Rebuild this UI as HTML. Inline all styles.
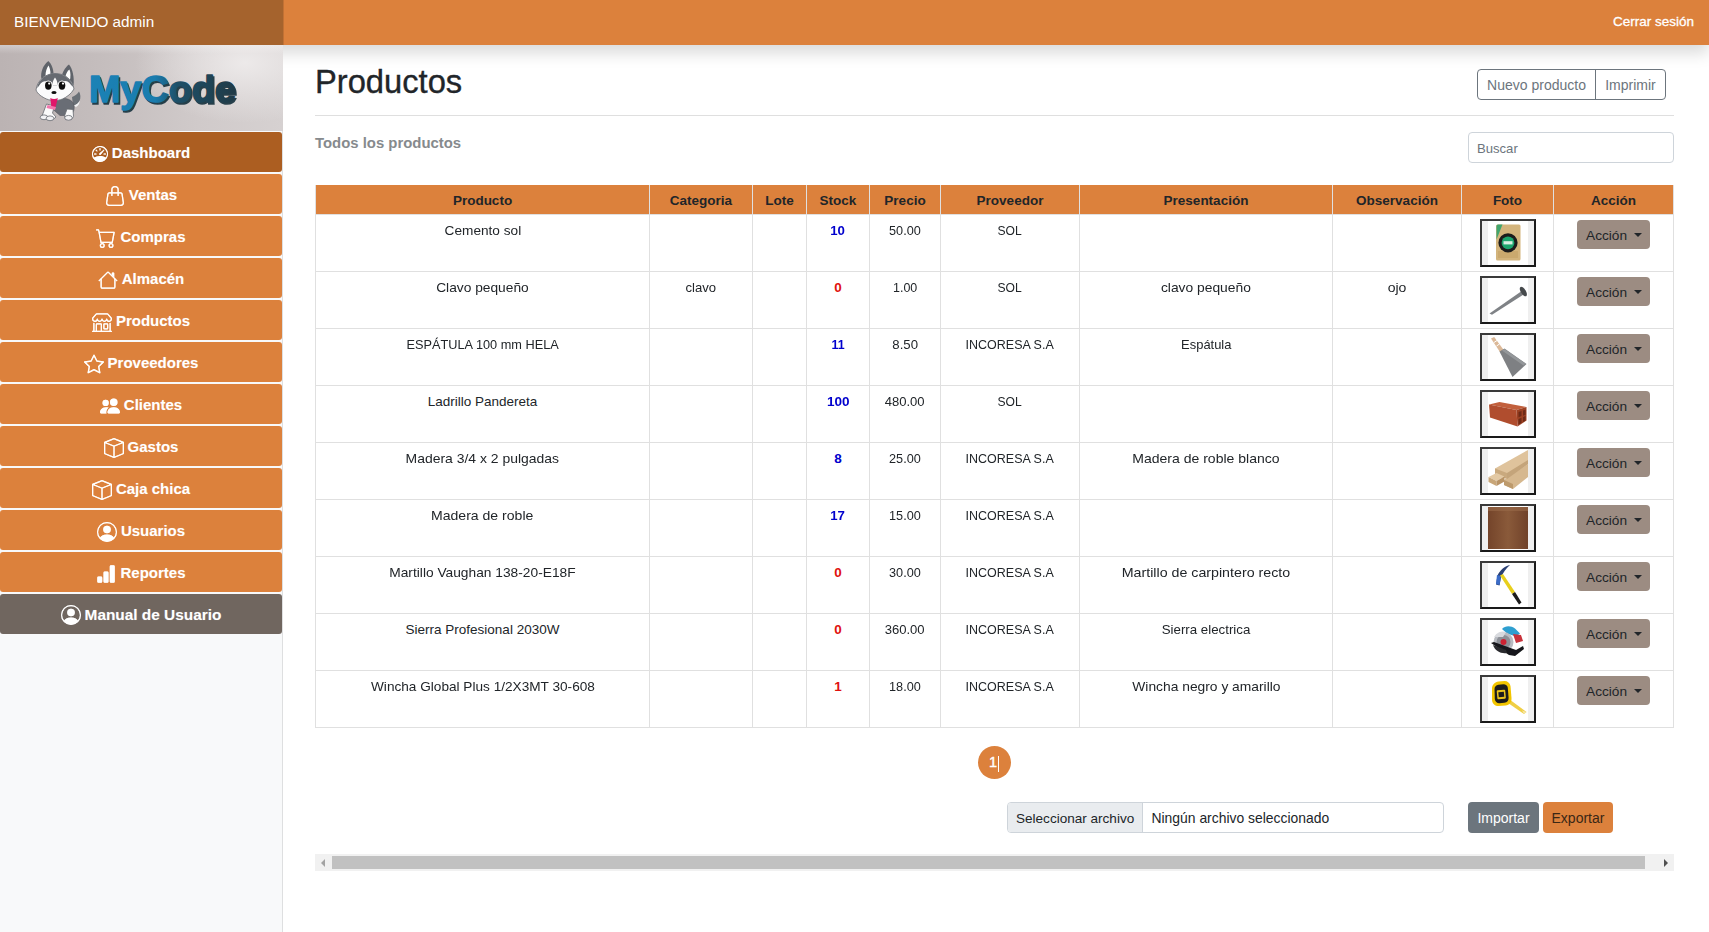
<!DOCTYPE html>
<html lang="es">
<head>
<meta charset="utf-8">
<title>Productos</title>
<style>
*{box-sizing:border-box}
html,body{margin:0;padding:0}
body{width:1709px;height:932px;overflow:hidden;background:#fff;font-family:"Liberation Sans",sans-serif;color:#212529;position:relative}
.abs{position:absolute}
#topbar{left:0;top:0;width:1709px;height:45px;background:#dc813c;box-shadow:0 8px 16px rgba(0,0,0,.15);z-index:5}
#brand{left:0;top:0;width:283px;height:45px;background:#a5632d;color:#fff;font-size:15.3px;line-height:43px;padding-left:14px;z-index:6;box-shadow:1px 0 0 rgba(0,0,0,.12)}
#logout{right:15px;top:0;height:45px;line-height:44px;color:#fff;font-size:13.5px;z-index:6;-webkit-text-stroke:.3px #fff}
#sidebar{left:0;top:45px;width:283px;height:887px;background:#f8f9fa;box-shadow:inset -1px 0 0 rgba(0,0,0,.1);z-index:2}
#logo{left:0;top:45px;width:283px;height:86px;z-index:5;background:linear-gradient(180deg,rgba(255,255,255,.3),rgba(255,255,255,0) 9px),radial-gradient(ellipse 110px 60px at 245px 18px,rgba(238,235,235,.95),rgba(238,235,235,0) 100%),linear-gradient(90deg,#bbb3b3 0%,#c4bdbd 35%,#d0caca 70%,#d6d1d1 100%)}
.mi{left:0;width:282px;height:40px;border-radius:3px;background:#dc813c;color:#fff;font-weight:bold;font-size:15px;line-height:41.5px;text-align:center;z-index:4;text-shadow:0 0 1px rgba(255,255,255,.3)}
.mi svg{vertical-align:middle;margin-right:4px;position:relative;top:-.5px;filter:drop-shadow(0 0 .4px rgba(255,255,255,.7))}
.mi.act{background:#ac5e21}
.mi.man{background:#70665f}
h1{margin:0;left:315px;top:61.5px;font-size:32.7px;font-weight:normal;color:#212529;line-height:40px;-webkit-text-stroke:.35px #212529}
#hr{left:315px;top:115px;width:1359px;height:1px;background:#dfdfdf}
#sub{left:315px;top:131.700px;font-size:14.9px;font-weight:bold;color:#868a8d;line-height:22px}
#bg{left:1477px;top:69px;width:189px;height:31px;border:1px solid #6c757d;border-radius:4px;color:#6c757d;font-size:14px;line-height:31px}
#bg span{position:absolute;top:0;height:29px;text-align:center}
#search{left:1468px;top:132px;width:206px;height:31px;border:1px solid #ced4da;border-radius:4px;color:#6c757d;font-size:13.1px;line-height:31px;padding-left:8px}

#thead{background:#dc813c}
.th{height:29px;line-height:32px;text-align:center;font-weight:bold;font-size:13.5px;color:#212529;white-space:nowrap}
.td{height:18px;line-height:18px;text-align:center;font-size:13.5px;color:#212529;white-space:nowrap}
.td span{display:inline-block}
.td.blue{color:#0000cd;font-weight:bold}
.td.red{color:#e0110f;font-weight:bold}
.vl{width:1px;background:#e0e0e0}
.hl{height:1px;background:#e0e0e0}
.ph{width:56px;height:48px;border:2px solid #1a1a1a;border-top-color:#3a3a3a;border-left-color:#3a3a3a;background:#fff}
.ph svg{display:block}
.ac{width:73px;height:29px;border-radius:4px;background:#9c8c82;color:#212529;font-size:13.7px;line-height:31px;padding-left:9px}
.ac i{position:absolute;left:57px;top:13px;width:0;height:0;border-left:4px solid transparent;border-right:4px solid transparent;border-top:4px solid #212529}

#pg{left:977.500px;top:746px;width:33px;height:33px;border-radius:50%;background:#dc813c;color:#fff;font-size:14.5px;-webkit-text-stroke:.4px #fff;line-height:33px;text-align:center;padding-right:2px}
#pg i{position:absolute;left:20.500px;top:10px;width:1px;height:16px;background:#fff}
#file{left:1007px;top:802px;width:437px;height:31px;border:1px solid #ced4da;border-radius:4px;background:#fff;font-size:14px;line-height:31px;color:#212529;overflow:hidden}
#file b{font-weight:normal;font-size:13.55px;position:absolute;left:0;top:0;width:135px;height:29px;background:#e9ecef;border-right:1px solid #ced4da;padding-left:8px}
#file span{position:absolute;left:143.500px;top:0;font-size:13.9px}
.btn{height:31px;border-radius:4px;font-size:14px;line-height:33px;text-align:center}
#imp{left:1468px;top:802px;width:71px;background:#6c757d;color:#fff}
#exp{left:1543px;top:802px;width:70px;background:#dc813c;color:#3a2715}
#sb{left:315px;top:854px;width:1359px;height:17px;background:#f1f1f1}
#sb .thumb{position:absolute;left:17px;top:2px;width:1313px;height:13px;background:#c1c1c1}
#sb .l{position:absolute;left:6px;top:4.500px;width:0;height:0;border-top:4px solid transparent;border-bottom:4px solid transparent;border-right:4px solid #a3a3a3}
#sb .r{position:absolute;left:1349px;top:4.500px;width:0;height:0;border-top:4px solid transparent;border-bottom:4px solid transparent;border-left:4px solid #505050}
</style>
</head>
<body>
<svg width="0" height="0" style="position:absolute"><defs><filter id="pb" x="-10%" y="-10%" width="120%" height="120%"><feGaussianBlur stdDeviation=".6"/></filter></defs></svg>
<div id="topbar" class="abs"></div>
<div id="brand" class="abs">BIENVENIDO admin</div>
<div id="logout" class="abs">Cerrar sesión</div>
<div id="sidebar" class="abs"></div>
<div id="logo" class="abs"><svg width="283" height="86" viewBox="0 0 283 86">
<defs><linearGradient id="lg" x1="0" x2="1" y1="0" y2="0"><stop offset="0" stop-color="#1b82b6"/><stop offset=".45" stop-color="#1a7cae"/><stop offset=".6" stop-color="#1e5068"/><stop offset="1" stop-color="#1f3a47"/></linearGradient>
<filter id="bl" x="-10%" y="-10%" width="120%" height="130%"><feGaussianBlur stdDeviation=".5"/></filter></defs>
<g filter="url(#bl)">
<path d="M72 52c3-1 5.500-3 7-5.500 1.500 2.500 2 6 .5 9.500-1 2.500-3.500 4-6.500 5z" fill="#6b7077"/>
<path d="M73.500 60.500c3-.8 5-2.500 6.200-5 0 2.500-1 5-3.700 6.500z" fill="#f4f4f6"/>
<path d="M54 55c5-2.500 14-2.500 18 1.500 3 3.500 2.500 8 1 11l-4 3-9 0-8-7z" fill="#696d74" stroke="#55585e" stroke-width=".6"/>
<path d="M46.500 59l8 2-2 7 3.500 4-3 2.500-8-1-3-2.500z" fill="#fafafa" stroke="#666a70" stroke-width=".8"/>
<path d="M67 64l6 .5 .5 7-2 3-6 0-1-3.500z" fill="#fafafa" stroke="#666a70" stroke-width=".8"/>
<ellipse cx="44" cy="72.300" rx="3.800" ry="2.400" fill="#f2f2f4" stroke="#666a70" stroke-width=".8"/>
<ellipse cx="50" cy="73.300" rx="3.800" ry="2.400" fill="#f2f2f4" stroke="#666a70" stroke-width=".8"/>
<ellipse cx="68.500" cy="72.800" rx="3.800" ry="2.400" fill="#f2f2f4" stroke="#666a70" stroke-width=".8"/>
<path d="M41.500 34c-1.500-6 1.500-14 6.800-18 3.200 3 5.200 8 5.200 13z" fill="#5f636a"/>
<path d="M45.500 31c0-4 1-8 3-10.500 1.200 2 2 5 2 8.500z" fill="#fff"/>
<path d="M62 30c1-4 4-8.500 7-10.500 3.500 4 5.500 13 4.500 21z" fill="#5f636a"/>
<path d="M65.500 31c1-3 2.200-5.500 4-6.500 1.200 3 1.200 8 .3 11z" fill="#fff"/>
<path d="M36 45c1-9 9-16.500 19-16.500s17.500 6 19 15.500c-2.500 4.500-7 8-11.500 10-5 2-11 2-16 0-4.500-2-9-5-10.500-9z" fill="#fbfbfc" stroke="#666a70" stroke-width=".8"/>
<path d="M37 43c1.500-8 9-14.500 18-14.500s16 5.500 18.500 13.500c-2-1-3.500-4-6-5.500-2.500-1.500-5 .5-7 2-2 1.500-3 2-5.500 2s-3.500-.8-5.500-2.300c-2-1.500-4.500-2.700-7-1.200-2.500 1.500-3.500 4.500-5.500 6z" fill="#666a71"/>
<path d="M55 32.500c1.800 2 2.500 5 2.800 8l-5.600 0c.3-3 1-6 2.800-8z" fill="#fbfbfc"/><ellipse cx="48.300" cy="40.800" rx="4.600" ry="5.300" fill="#fbfbfc"/><ellipse cx="62" cy="40.800" rx="4.600" ry="5.300" fill="#fbfbfc"/><ellipse cx="48.300" cy="40.600" rx="3.300" ry="4.200" fill="#111"/>
<ellipse cx="62" cy="40.600" rx="3.300" ry="4.200" fill="#111"/>
<circle cx="49.200" cy="38.600" r="1.100" fill="#fff"/><circle cx="63" cy="38.600" r="1.100" fill="#fff"/>
<ellipse cx="54" cy="47.500" rx="2.600" ry="1.600" fill="#111"/>
<path d="M50.300 53c2 1.200 5.500 1.200 7.500 0l-2 8.500c-1 1.500-3 1.500-4.500 0z" fill="#e0146a"/>
<path d="M47.500 60l8.500 2-1 3-8.500-2z" fill="#f277ad"/>
</g>
<text x="90.400" y="58.600" font-family="'Liberation Sans',sans-serif" font-weight="bold" font-size="36.500" textLength="147" lengthAdjust="spacingAndGlyphs" fill="#14303c" stroke="#14303c" stroke-width="1.6" opacity=".9">MyCode</text>
<text x="88.900" y="56.600" font-family="'Liberation Sans',sans-serif" font-weight="bold" font-size="36.500" textLength="147" lengthAdjust="spacingAndGlyphs" fill="url(#lg)" stroke="url(#lg)" stroke-width="1.600" stroke-linejoin="round">MyCode</text>
</svg></div>
<!--MENU-->
<div class="abs mi act" style="top:132px"><svg width="16" height="16" viewBox="0 0 16 16" fill="#fff"><path d="M8 2a.5.5 0 0 1 .5.5V4a.5.5 0 0 1-1 0V2.5A.5.5 0 0 1 8 2zM3.732 3.732a.5.5 0 0 1 .707 0l.915.914a.5.5 0 1 1-.708.708l-.914-.915a.5.5 0 0 1 0-.707zM2 8a.5.5 0 0 1 .5-.5h1.586a.5.5 0 0 1 0 1H2.5A.5.5 0 0 1 2 8zm9.5 0a.5.5 0 0 1 .5-.5h1.5a.5.5 0 0 1 0 1H12a.5.5 0 0 1-.5-.5zm.754-4.246a.389.389 0 0 0-.527-.02L7.547 7.31A.91.91 0 1 0 8.85 8.569l3.434-4.297a.389.389 0 0 0-.029-.518z"/><path fill-rule="evenodd" d="M6.664 15.889A8 8 0 1 1 9.336.11a8 8 0 0 1-2.672 15.78zm-4.665-4.283A11.945 11.945 0 0 1 8 10c2.186 0 4.236.585 6.001 1.606a7 7 0 1 0-12.002 0z"/></svg><span>Dashboard</span></div>
<div class="abs mi " style="top:174px"><svg width="20" height="20" viewBox="0 0 16 16" fill="#fff"><path d="M8 1a2 2 0 0 1 2 2v2H6V3a2 2 0 0 1 2-2zm3 4V3a3 3 0 1 0-6 0v2H3.36a1.5 1.5 0 0 0-1.483 1.277L.85 13.13A2.5 2.5 0 0 0 3.322 16h9.355a2.5 2.5 0 0 0 2.473-2.87l-1.028-6.853A1.5 1.5 0 0 0 12.64 5H11zm-1 1v1.5a.5.5 0 0 0 1 0V6h1.639a.5.5 0 0 1 .494.426l1.028 6.851A1.5 1.5 0 0 1 12.678 15H3.322a1.5 1.5 0 0 1-1.483-1.723l1.028-6.851A.5.5 0 0 1 3.36 6H5v1.5a.5.5 0 1 0 1 0V6h4z"/></svg><span>Ventas</span></div>
<div class="abs mi " style="top:216px"><svg width="20" height="20" viewBox="0 0 16 16" fill="#fff"><path d="M0 1.5A.5.5 0 0 1 .5 1H2a.5.5 0 0 1 .485.379L2.89 3H14.5a.5.5 0 0 1 .491.592l-1.5 8A.5.5 0 0 1 13 12H4a.5.5 0 0 1-.491-.408L2.01 3.607 1.61 2H.5a.5.5 0 0 1-.5-.5zM3.102 4l1.313 7h8.17l1.313-7H3.102zM5 12a2 2 0 1 0 0 4 2 2 0 0 0 0-4zm7 0a2 2 0 1 0 0 4 2 2 0 0 0 0-4zm-7 1a1 1 0 1 1 0 2 1 1 0 0 1 0-2zm7 0a1 1 0 1 1 0 2 1 1 0 0 1 0-2z"/></svg><span>Compras</span></div>
<div class="abs mi " style="top:258px"><svg width="20" height="20" viewBox="0 0 16 16" fill="#fff"><path fill-rule="evenodd" d="M2 13.5V7h1v6.5a.5.5 0 0 0 .5.5h9a.5.5 0 0 0 .5-.5V7h1v6.5a1.5 1.5 0 0 1-1.5 1.5h-9A1.5 1.5 0 0 1 2 13.5zm11-11V6l-2-2V2.5a.5.5 0 0 1 .5-.5h1a.5.5 0 0 1 .5.5z"/><path fill-rule="evenodd" d="M7.293 1.5a1 1 0 0 1 1.414 0l6.647 6.646a.5.5 0 0 1-.708.708L8 2.207 1.354 8.854a.5.5 0 1 1-.708-.708L7.293 1.5z"/></svg><span>Almacén</span></div>
<div class="abs mi " style="top:300px"><svg width="20" height="20" viewBox="0 0 16 16" fill="#fff"><path d="M2.97 1.35A1 1 0 0 1 3.73 1h8.54a1 1 0 0 1 .76.35l2.609 3.044A1.5 1.5 0 0 1 16 5.37v.255a2.375 2.375 0 0 1-4.25 1.458A2.371 2.371 0 0 1 9.875 8 2.37 2.37 0 0 1 8 7.083 2.37 2.37 0 0 1 6.125 8a2.37 2.37 0 0 1-1.875-.917A2.375 2.375 0 0 1 0 5.625V5.37a1.5 1.5 0 0 1 .361-.976l2.61-3.045zm1.78 4.275a1.375 1.375 0 0 0 2.75 0 .5.5 0 0 1 1 0 1.375 1.375 0 0 0 2.75 0 .5.5 0 0 1 1 0 1.375 1.375 0 1 0 2.75 0V5.37a.5.5 0 0 0-.12-.325L12.27 2H3.73L1.12 5.045A.5.5 0 0 0 1 5.37v.255a1.375 1.375 0 0 0 2.75 0 .5.5 0 0 1 1 0zM1.5 8.5A.5.5 0 0 1 2 9v6h1v-5a1 1 0 0 1 1-1h3a1 1 0 0 1 1 1v5h6V9a.5.5 0 0 1 1 0v6h.5a.5.5 0 0 1 0 1H.5a.5.5 0 0 1 0-1H1V9a.5.5 0 0 1 .5-.5zM4 15h3v-5H4v5zm5-5a1 1 0 0 1 1-1h2a1 1 0 0 1 1 1v3a1 1 0 0 1-1 1h-2a1 1 0 0 1-1-1v-3zm3 0h-2v3h2v-3z"/></svg><span>Productos</span></div>
<div class="abs mi " style="top:342px"><svg width="20" height="20" viewBox="0 0 16 16" fill="#fff"><path d="M2.866 14.85c-.078.444.36.791.746.593l4.39-2.256 4.389 2.256c.386.198.824-.149.746-.592l-.83-4.73 3.522-3.356c.33-.314.16-.888-.282-.95l-4.898-.696L8.465.792a.513.513 0 0 0-.927 0L5.354 5.12l-4.898.696c-.441.062-.612.636-.283.95l3.523 3.356-.83 4.73zm4.905-2.767-3.686 1.894.694-3.957a.565.565 0 0 0-.163-.505L1.71 6.745l4.052-.576a.525.525 0 0 0 .393-.288L8 2.223l1.847 3.658a.525.525 0 0 0 .393.288l4.052.575-2.906 2.77a.565.565 0 0 0-.163.506l.694 3.957-3.686-1.894a.503.503 0 0 0-.461 0z"/></svg><span>Proveedores</span></div>
<div class="abs mi " style="top:384px"><svg width="20" height="20" viewBox="0 0 16 16" fill="#fff"><path d="M7 14s-1 0-1-1 1-4 5-4 5 3 5 4-1 1-1 1H7zm4-6a3 3 0 1 0 0-6 3 3 0 0 0 0 6z"/><path fill-rule="evenodd" d="M5.216 14A2.238 2.238 0 0 1 5 13c0-1.355.68-2.75 1.936-3.72A6.325 6.325 0 0 0 5 9c-4 0-5 3-5 4s1 1 1 1h4.216z"/><path d="M4.5 8a2.5 2.5 0 1 0 0-5 2.5 2.5 0 0 0 0 5z"/></svg><span>Clientes</span></div>
<div class="abs mi " style="top:426px"><svg width="20" height="20" viewBox="0 0 16 16" fill="#fff"><path d="M8.186 1.113a.5.5 0 0 0-.372 0L1.846 3.5 8 5.961 14.154 3.5 8.186 1.113zM15 4.239l-6.5 2.6v7.922l6.5-2.6V4.24zM7.5 14.762V6.838L1 4.239v7.923l6.5 2.6zM7.443.184a1.5 1.5 0 0 1 1.114 0l7.129 2.852A.5.5 0 0 1 16 3.5v8.662a1 1 0 0 1-.629.928l-7.185 2.874a.5.5 0 0 1-.372 0L.63 13.09a1 1 0 0 1-.63-.928V3.5a.5.5 0 0 1 .314-.464L7.443.184z"/></svg><span>Gastos</span></div>
<div class="abs mi " style="top:468px"><svg width="20" height="20" viewBox="0 0 16 16" fill="#fff"><path d="M8.186 1.113a.5.5 0 0 0-.372 0L1.846 3.5 8 5.961 14.154 3.5 8.186 1.113zM15 4.239l-6.5 2.6v7.922l6.5-2.6V4.24zM7.5 14.762V6.838L1 4.239v7.923l6.5 2.6zM7.443.184a1.5 1.5 0 0 1 1.114 0l7.129 2.852A.5.5 0 0 1 16 3.5v8.662a1 1 0 0 1-.629.928l-7.185 2.874a.5.5 0 0 1-.372 0L.63 13.09a1 1 0 0 1-.63-.928V3.5a.5.5 0 0 1 .314-.464L7.443.184z"/></svg><span>Caja chica</span></div>
<div class="abs mi " style="top:510px"><svg width="20" height="20" viewBox="0 0 16 16" fill="#fff"><path d="M11 6a3 3 0 1 1-6 0 3 3 0 0 1 6 0z"/><path fill-rule="evenodd" d="M0 8a8 8 0 1 1 16 0A8 8 0 0 1 0 8zm8-7a7 7 0 0 0-5.468 11.37C3.242 11.226 4.805 10 8 10s4.757 1.225 5.468 2.37A7 7 0 0 0 8 1z"/></svg><span>Usuarios</span></div>
<div class="abs mi " style="top:552px"><svg width="20" height="20" viewBox="0 0 16 16" fill="#fff"><path d="M1 11a1 1 0 0 1 1-1h2a1 1 0 0 1 1 1v3a1 1 0 0 1-1 1H2a1 1 0 0 1-1-1v-3zm5-4a1 1 0 0 1 1-1h2a1 1 0 0 1 1 1v7a1 1 0 0 1-1 1H7a1 1 0 0 1-1-1V7zm5-5a1 1 0 0 1 1-1h2a1 1 0 0 1 1 1v12a1 1 0 0 1-1 1h-2a1 1 0 0 1-1-1V2z"/></svg><span>Reportes</span></div>
<div class="abs mi man" style="top:594px;font-size:15.4px"><svg width="20" height="20" viewBox="0 0 16 16" fill="#fff"><path d="M11 6a3 3 0 1 1-6 0 3 3 0 0 1 6 0z"/><path fill-rule="evenodd" d="M0 8a8 8 0 1 1 16 0A8 8 0 0 1 0 8zm8-7a7 7 0 0 0-5.468 11.37C3.242 11.226 4.805 10 8 10s4.757 1.225 5.468 2.37A7 7 0 0 0 8 1z"/></svg><span>Manual de Usuario</span></div>
<!--/MENU-->
<h1 class="abs">Productos</h1>
<div id="bg" class="abs"><span style="left:0;width:118px;border-right:1px solid #6c757d">Nuevo producto</span><span style="left:118px;width:69px">Imprimir</span></div>
<div id="hr" class="abs"></div>
<div id="sub" class="abs">Todos los productos</div>
<div id="search" class="abs">Buscar</div>
<!--TABLE-->
<div class="abs" id="thead" style="left:315px;top:185px;width:1359px;height:29px"></div>
<div class="abs th" style="left:316px;top:185px;width:333px">Producto</div>
<div class="abs th" style="left:650px;top:185px;width:102px">Categoria</div>
<div class="abs th" style="left:753px;top:185px;width:53px">Lote</div>
<div class="abs th" style="left:807px;top:185px;width:62px">Stock</div>
<div class="abs th" style="left:870px;top:185px;width:70px">Precio</div>
<div class="abs th" style="left:941px;top:185px;width:138px">Proveedor</div>
<div class="abs th" style="left:1080px;top:185px;width:252px">Presentación</div>
<div class="abs th" style="left:1333px;top:185px;width:128px">Observación</div>
<div class="abs th" style="left:1462px;top:185px;width:91px">Foto</div>
<div class="abs th" style="left:1554px;top:185px;width:119px">Acción</div>
<div class="abs td" style="left:316px;top:222px;width:333px"><span style="transform:scaleX(1.010)">Cemento sol</span></div>
<div class="abs td blue" style="left:807px;top:222px;width:62px"><span style="transform:scaleX(0.980)">10</span></div>
<div class="abs td" style="left:870px;top:222px;width:70px"><span style="transform:scaleX(0.938)">50.00</span></div>
<div class="abs td" style="left:941px;top:222px;width:138px"><span style="transform:scaleX(0.896)">SOL</span></div>
<div class="abs ph" style="left:1480px;top:219px"><svg width="52" height="44" viewBox="0 0 52 44"><rect width="52" height="44" fill="#fff"/><rect width="6" height="44" fill="#efefef"/><rect x="46" width="6" height="44" fill="#efefef"/><g filter="url(#pb)"><rect x="14" y="3.500" width="24.500" height="36" rx="1.500" fill="#d3b47c"/><path d="M14.500 5a1.500 1.500 0 0 1 1.500-1.500h4.500l-6 15z" fill="#3fa56e"/><rect x="16" y="30" width="20" height="7" fill="#caa96e"/><circle cx="26" cy="21.800" r="9.600" fill="#1c1c1c"/><circle cx="26" cy="21.800" r="6.400" fill="#1fa56d"/><rect x="21.500" y="20.200" width="9" height="3.200" fill="#d8f0e3"/></g></svg></div>
<div class="abs ac" style="left:1577px;top:220px">Acción<i></i></div>
<div class="abs td" style="left:316px;top:279px;width:333px"><span style="transform:scaleX(1.019)">Clavo pequeño</span></div>
<div class="abs td" style="left:650px;top:279px;width:102px"><span style="transform:scaleX(0.972)">clavo</span></div>
<div class="abs td red" style="left:807px;top:279px;width:62px"><span>0</span></div>
<div class="abs td" style="left:870px;top:279px;width:70px"><span style="transform:scaleX(0.923)">1.00</span></div>
<div class="abs td" style="left:941px;top:279px;width:138px"><span style="transform:scaleX(0.896)">SOL</span></div>
<div class="abs td" style="left:1080px;top:279px;width:252px"><span style="transform:scaleX(1.024)">clavo pequeño</span></div>
<div class="abs td" style="left:1333px;top:279px;width:128px"><span style="transform:scaleX(1.039)">ojo</span></div>
<div class="abs ph" style="left:1480px;top:276px"><svg width="52" height="44" viewBox="0 0 52 44"><rect width="52" height="44" fill="#fff"/><rect width="6" height="44" fill="#efefef"/><rect x="46" width="6" height="44" fill="#efefef"/><g filter="url(#pb)"><path d="M7.500 35.500L39 13.500l2.200 3.200L10 36.700z" fill="#7f8286"/><ellipse cx="41.500" cy="13.500" rx="2.500" ry="5.400" transform="rotate(-32 41.500 13.800)" fill="#45484c"/></g></svg></div>
<div class="abs ac" style="left:1577px;top:277px">Acción<i></i></div>
<div class="abs td" style="left:316px;top:336px;width:333px"><span style="transform:scaleX(0.943)">ESPÁTULA 100 mm HELA</span></div>
<div class="abs td blue" style="left:807px;top:336px;width:62px"><span style="transform:scaleX(0.921)">11</span></div>
<div class="abs td" style="left:870px;top:336px;width:70px"><span style="transform:scaleX(0.977)">8.50</span></div>
<div class="abs td" style="left:941px;top:336px;width:138px"><span style="transform:scaleX(0.925)">INCORESA S.A</span></div>
<div class="abs td" style="left:1080px;top:336px;width:252px"><span style="transform:scaleX(0.958)">Espátula</span></div>
<div class="abs ph" style="left:1480px;top:333px"><svg width="52" height="44" viewBox="0 0 52 44"><rect width="52" height="44" fill="#fff"/><rect width="6" height="44" fill="#efefef"/><rect x="46" width="6" height="44" fill="#efefef"/><g filter="url(#pb)"><path d="M9 3.500l3.200-1.500 9.500 13-3.600 2.200z" fill="#dcb998"/><path d="M12 7.500l3-2M14.500 11l3-2" stroke="#fff" stroke-width="1"/><path d="M17.500 16.500l5-3 22 15.500-14 13z" fill="#7e8083"/><path d="M20 15.500l2.500-1.500 21 14.500-2 2z" fill="#94979a"/></g></svg></div>
<div class="abs ac" style="left:1577px;top:334px">Acción<i></i></div>
<div class="abs td" style="left:316px;top:393px;width:333px"><span>Ladrillo Pandereta</span></div>
<div class="abs td blue" style="left:807px;top:393px;width:62px"><span style="transform:scaleX(1.005)">100</span></div>
<div class="abs td" style="left:870px;top:393px;width:70px"><span style="transform:scaleX(0.967)">480.00</span></div>
<div class="abs td" style="left:941px;top:393px;width:138px"><span style="transform:scaleX(0.896)">SOL</span></div>
<div class="abs ph" style="left:1480px;top:390px"><svg width="52" height="44" viewBox="0 0 52 44"><rect width="52" height="44" fill="#fff"/><rect width="6" height="44" fill="#efefef"/><rect x="46" width="6" height="44" fill="#efefef"/><g filter="url(#pb)"><path d="M7 12.500l10.500-2.500 27 5-10 3z" fill="#c2603c"/><path d="M7 12.500l27.500 5.500 1 16.500-27.500-9z" fill="#b04e2d"/><path d="M34.500 18l10-3 0 13.500-9 6z" fill="#9c4124"/><path d="M36.500 20l3-1v5l-3 1.300zM41 18.500l2.500-.8v5l-2.500 1zM36.500 27l3-1.300v5l-3 1.800zM41 25l2.500-1v4.500l-2.500 1.600z" fill="#6e2a15"/></g></svg></div>
<div class="abs ac" style="left:1577px;top:391px">Acción<i></i></div>
<div class="abs td" style="left:316px;top:450px;width:333px"><span style="transform:scaleX(1.032)">Madera 3/4 x 2 pulgadas</span></div>
<div class="abs td blue" style="left:807px;top:450px;width:62px"><span>8</span></div>
<div class="abs td" style="left:870px;top:450px;width:70px"><span style="transform:scaleX(0.938)">25.00</span></div>
<div class="abs td" style="left:941px;top:450px;width:138px"><span style="transform:scaleX(0.925)">INCORESA S.A</span></div>
<div class="abs td" style="left:1080px;top:450px;width:252px"><span style="transform:scaleX(1.038)">Madera de roble blanco</span></div>
<div class="abs ph" style="left:1480px;top:447px"><svg width="52" height="44" viewBox="0 0 52 44"><rect width="52" height="44" fill="#fff"/><rect width="6" height="44" fill="#efefef"/><rect x="46" width="6" height="44" fill="#efefef"/><g filter="url(#pb)"><path d="M13 19.500L46 1v14L25 30l-12-4.500z" fill="#dfc39c"/><path d="M13 19.500l12 4.500v6l-12-4.500z" fill="#c9a97e"/><path d="M6.500 28l8-4 8 3.500-8 4.500z" fill="#e3c9a4"/><path d="M6.500 28l8 4v5l-8-4z" fill="#c8a678"/><path d="M14.500 32l8-4.500v5l-8 4.500z" fill="#b99466"/><path d="M22 31l24-16v13L31 40l-9-4z" fill="#d6b88f"/><path d="M22 31l9 4v5l-9-4z" fill="#bd9a6c"/><path d="M25 24l21-13v4L25 30z" fill="#c4a47a"/></g></svg></div>
<div class="abs ac" style="left:1577px;top:448px">Acción<i></i></div>
<div class="abs td" style="left:316px;top:507px;width:333px"><span style="transform:scaleX(1.041)">Madera de roble</span></div>
<div class="abs td blue" style="left:807px;top:507px;width:62px"><span style="transform:scaleX(0.980)">17</span></div>
<div class="abs td" style="left:870px;top:507px;width:70px"><span style="transform:scaleX(0.938)">15.00</span></div>
<div class="abs td" style="left:941px;top:507px;width:138px"><span style="transform:scaleX(0.925)">INCORESA S.A</span></div>
<div class="abs ph" style="left:1480px;top:504px"><svg width="52" height="44" viewBox="0 0 52 44"><rect width="52" height="44" fill="#fff"/><rect width="6" height="44" fill="#efefef"/><rect x="46" width="6" height="44" fill="#efefef"/><defs><linearGradient id="wd" x1="0" x2="1"><stop offset="0" stop-color="#74442a"/><stop offset=".5" stop-color="#8a5a3a"/><stop offset="1" stop-color="#70422a"/></linearGradient></defs><rect x="6" y="1" width="40" height="42" fill="url(#wd)"/><rect x="6" y="1" width="40" height="4" fill="#9a6b49" opacity=".6"/></svg></div>
<div class="abs ac" style="left:1577px;top:505px">Acción<i></i></div>
<div class="abs td" style="left:316px;top:564px;width:333px"><span style="transform:scaleX(1.019)">Martillo Vaughan 138-20-E18F</span></div>
<div class="abs td red" style="left:807px;top:564px;width:62px"><span>0</span></div>
<div class="abs td" style="left:870px;top:564px;width:70px"><span style="transform:scaleX(0.938)">30.00</span></div>
<div class="abs td" style="left:941px;top:564px;width:138px"><span style="transform:scaleX(0.925)">INCORESA S.A</span></div>
<div class="abs td" style="left:1080px;top:564px;width:252px"><span style="transform:scaleX(1.054)">Martillo de carpintero recto</span></div>
<div class="abs ph" style="left:1480px;top:561px"><svg width="52" height="44" viewBox="0 0 52 44"><rect width="52" height="44" fill="#fff"/><rect width="6" height="44" fill="#efefef"/><rect x="46" width="6" height="44" fill="#efefef"/><g filter="url(#pb)"><path d="M28 2c-5 1-10 5-12.500 10.500l-1.500 9 3.500 1 1.500-8c2-5 5-9 9-12.500z" fill="#2b3f73"/><path d="M15 12l4 1-1.500 9-3.500-1z" fill="#3a6cc8"/><path d="M18 12.500l3-1.500 12 18-3 2z" fill="#e8cf1e"/><path d="M30 31l3-2 6.500 10.500-2.500 2z" fill="#1a1a1a"/></g></svg></div>
<div class="abs ac" style="left:1577px;top:562px">Acción<i></i></div>
<div class="abs td" style="left:316px;top:621px;width:333px"><span>Sierra Profesional 2030W</span></div>
<div class="abs td red" style="left:807px;top:621px;width:62px"><span>0</span></div>
<div class="abs td" style="left:870px;top:621px;width:70px"><span style="transform:scaleX(0.967)">360.00</span></div>
<div class="abs td" style="left:941px;top:621px;width:138px"><span style="transform:scaleX(0.925)">INCORESA S.A</span></div>
<div class="abs td" style="left:1080px;top:621px;width:252px"><span style="transform:scaleX(0.984)">Sierra electrica</span></div>
<div class="abs ph" style="left:1480px;top:618px"><svg width="52" height="44" viewBox="0 0 52 44"><rect width="52" height="44" fill="#fff"/><rect width="6" height="44" fill="#efefef"/><rect x="46" width="6" height="44" fill="#efefef"/><g filter="url(#pb)"><path d="M20 9c3-3.500 9-3.500 13-.5l5 5-4 3-9-3z" fill="#2f9fd0"/><path d="M31 14l8 1 2 6-7 2z" fill="#c8303a"/><circle cx="21.500" cy="22" r="10" fill="#b9bcc2"/><circle cx="21.500" cy="22" r="7" fill="#8d9097"/><circle cx="21.500" cy="22" r="3" fill="#c23"/><path d="M12 17a10 10 0 0 1 12-5l-3 5z" fill="#d8dade"/><path d="M9 23l3-1 22 8 7-4 1 3-9 7-6-1z" fill="#17181a"/><path d="M11 25c2 6 8 9 14 8l-1-3z" fill="#2a2b2e"/></g></svg></div>
<div class="abs ac" style="left:1577px;top:619px">Acción<i></i></div>
<div class="abs td" style="left:316px;top:678px;width:333px"><span style="transform:scaleX(1.009)">Wincha Global Plus 1/2X3MT 30-608</span></div>
<div class="abs td red" style="left:807px;top:678px;width:62px"><span>1</span></div>
<div class="abs td" style="left:870px;top:678px;width:70px"><span style="transform:scaleX(0.938)">18.00</span></div>
<div class="abs td" style="left:941px;top:678px;width:138px"><span style="transform:scaleX(0.925)">INCORESA S.A</span></div>
<div class="abs td" style="left:1080px;top:678px;width:252px"><span style="transform:scaleX(1.023)">Wincha negro y amarillo</span></div>
<div class="abs ph" style="left:1480px;top:675px"><svg width="52" height="44" viewBox="0 0 52 44"><rect width="52" height="44" fill="#fff"/><rect width="6" height="44" fill="#efefef"/><rect x="46" width="6" height="44" fill="#efefef"/><g filter="url(#pb)"><path d="M26 26l3-2.500 15.500 11.500-2.500 2z" fill="#f0cf45"/><path d="M40 33.500l4.500 1.500-2.500 2z" fill="#f6e6a8"/><path d="M10 11c0-3 3-6 6.500-6.500l6-.5c3 0 5.500 2 6 5l1 12c.3 4-2 7-6 7.500l-7 .5c-3.500 0-6-2-6.500-6z" fill="#f2c500"/><path d="M12.500 12c0-2 1.500-4 4-4.300l5-.4c2.300 0 4 1.300 4.300 3.500l.8 10c.2 2.800-1.500 4.800-4.200 5l-5 .4c-2.600 0-4.300-1.500-4.600-4.200z" fill="#1d1d1b"/><rect x="15" y="13" width="8.500" height="9" rx="1" transform="rotate(-5 19 17)" fill="#e9c21c"/><rect x="16.500" y="15" width="5.500" height="5" transform="rotate(-5 19 17)" fill="#1d1d1b"/></g>
</svg></div>
<div class="abs ac" style="left:1577px;top:676px">Acción<i></i></div>
<div class="abs vl" style="left:315px;top:185px;height:543px"></div>
<div class="abs vl" style="left:649px;top:185px;height:543px"></div>
<div class="abs vl" style="left:752px;top:185px;height:543px"></div>
<div class="abs vl" style="left:806px;top:185px;height:543px"></div>
<div class="abs vl" style="left:869px;top:185px;height:543px"></div>
<div class="abs vl" style="left:940px;top:185px;height:543px"></div>
<div class="abs vl" style="left:1079px;top:185px;height:543px"></div>
<div class="abs vl" style="left:1332px;top:185px;height:543px"></div>
<div class="abs vl" style="left:1461px;top:185px;height:543px"></div>
<div class="abs vl" style="left:1553px;top:185px;height:543px"></div>
<div class="abs vl" style="left:1673px;top:185px;height:543px"></div>
<div class="abs hl" style="left:315px;top:214px;width:1359px"></div>
<div class="abs hl" style="left:315px;top:271px;width:1359px"></div>
<div class="abs hl" style="left:315px;top:328px;width:1359px"></div>
<div class="abs hl" style="left:315px;top:385px;width:1359px"></div>
<div class="abs hl" style="left:315px;top:442px;width:1359px"></div>
<div class="abs hl" style="left:315px;top:499px;width:1359px"></div>
<div class="abs hl" style="left:315px;top:556px;width:1359px"></div>
<div class="abs hl" style="left:315px;top:613px;width:1359px"></div>
<div class="abs hl" style="left:315px;top:670px;width:1359px"></div>
<div class="abs hl" style="left:315px;top:727px;width:1359px"></div>
<!--/TABLE-->
<!--FOOT-->
<div id="pg" class="abs">1<i></i></div>
<div id="file" class="abs"><b>Seleccionar archivo</b><span>Ningún archivo seleccionado</span></div>
<div id="imp" class="abs btn">Importar</div>
<div id="exp" class="abs btn">Exportar</div>
<div id="sb" class="abs"><div class="l"></div><div class="thumb"></div><div class="r"></div></div>
<!--/FOOT-->
</body>
</html>
